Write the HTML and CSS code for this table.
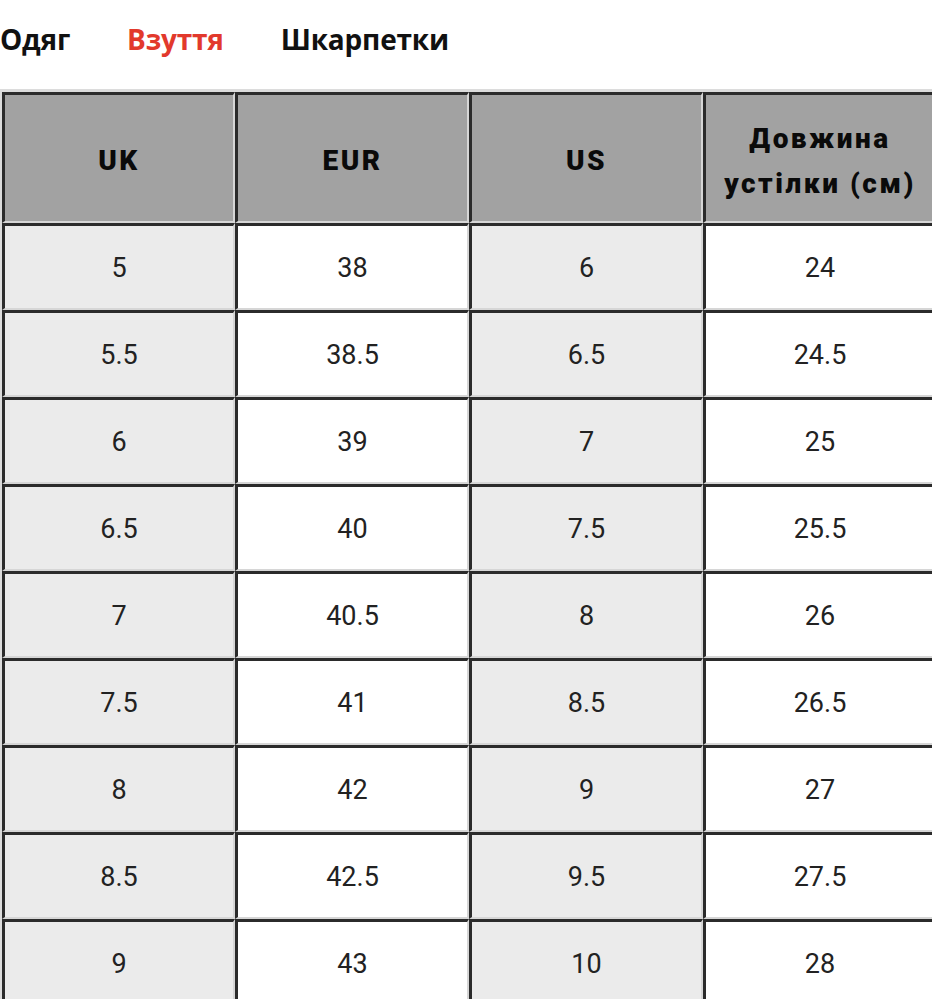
FILE: index.html
```html
<!DOCTYPE html>
<html lang="uk">
<head>
<meta charset="utf-8">
<link rel="stylesheet" href="styles.css">
</head>
<body>
<nav class="tabs">
  <span class="tab">Одяг</span>
  <span class="tab active">Взуття</span>
  <span class="tab">Шкарпетки</span>
</nav>
<table class="sizes">
  <colgroup>
    <col class="c1"><col class="c2"><col class="c3"><col class="c4">
  </colgroup>
  <thead>
    <tr><th>UK</th><th>EUR</th><th>US</th><th>Довжина устілки (см)</th></tr>
  </thead>
  <tbody>
    <tr><td>5</td><td>38</td><td>6</td><td>24</td></tr>
    <tr><td>5.5</td><td>38.5</td><td>6.5</td><td>24.5</td></tr>
    <tr><td>6</td><td>39</td><td>7</td><td>25</td></tr>
    <tr><td>6.5</td><td>40</td><td>7.5</td><td>25.5</td></tr>
    <tr><td>7</td><td>40.5</td><td>8</td><td>26</td></tr>
    <tr><td>7.5</td><td>41</td><td>8.5</td><td>26.5</td></tr>
    <tr><td>8</td><td>42</td><td>9</td><td>27</td></tr>
    <tr><td>8.5</td><td>42.5</td><td>9.5</td><td>27.5</td></tr>
    <tr><td>9</td><td>43</td><td>10</td><td>28</td></tr>
  </tbody>
</table>
</body>
</html>
```
FILE: styles.css
```css
html, body {
  margin: 0;
  padding: 0;
  background: #ffffff;
  overflow: hidden;
}
body {
  width: 932px;
  height: 999px;
  font-family: Roboto, "Liberation Sans", sans-serif;
}
.tabs {
  display: flex;
  gap: 57px;
  height: 89px;
  box-sizing: border-box;
  padding-top: 20px;
  font-family: "Open Sans", "Noto Sans", sans-serif;
  font-weight: 700;
  font-size: 28px;
  line-height: 38px;
  letter-spacing: -0.2px;
  color: #111111;
}
.tab.active {
  color: #e2392c;
}
.sizes {
  border-collapse: separate;
  border-spacing: 0;
  table-layout: fixed;
  width: 936px;
  border-top: 3px solid #dcdcdc;
  border-left: 2px solid #dcdcdc;
  border-right: 2px solid #555;
  border-bottom: 2px solid #555;
}
.c1 { width: 233px; }
.c2 { width: 234px; }
.c3 { width: 234px; }
.c4 { width: 233px; }
.sizes th,
.sizes td {
  border-top: 3px solid #2b2b2b;
  border-left: 3px solid #2b2b2b;
  border-right: 2px solid #d6d6d6;
  border-bottom: 2px solid #d6d6d6;
  text-align: center;
  vertical-align: middle;
  padding: 0;
}
.sizes th {
  height: 121px;
  background: #a2a2a2;
  color: #0a0a0a;
  font-weight: 900;
  font-size: 28px;
  line-height: 45px;
  letter-spacing: 2.5px;
  padding: 5px 6px 0;
}
.sizes td {
  height: 81px;
  padding-top: 1px;
  font-size: 27px;
  font-weight: 400;
  color: #222222;
  background: #ffffff;
}
.sizes td:nth-child(odd) {
  background: #ebebeb;
}
```
